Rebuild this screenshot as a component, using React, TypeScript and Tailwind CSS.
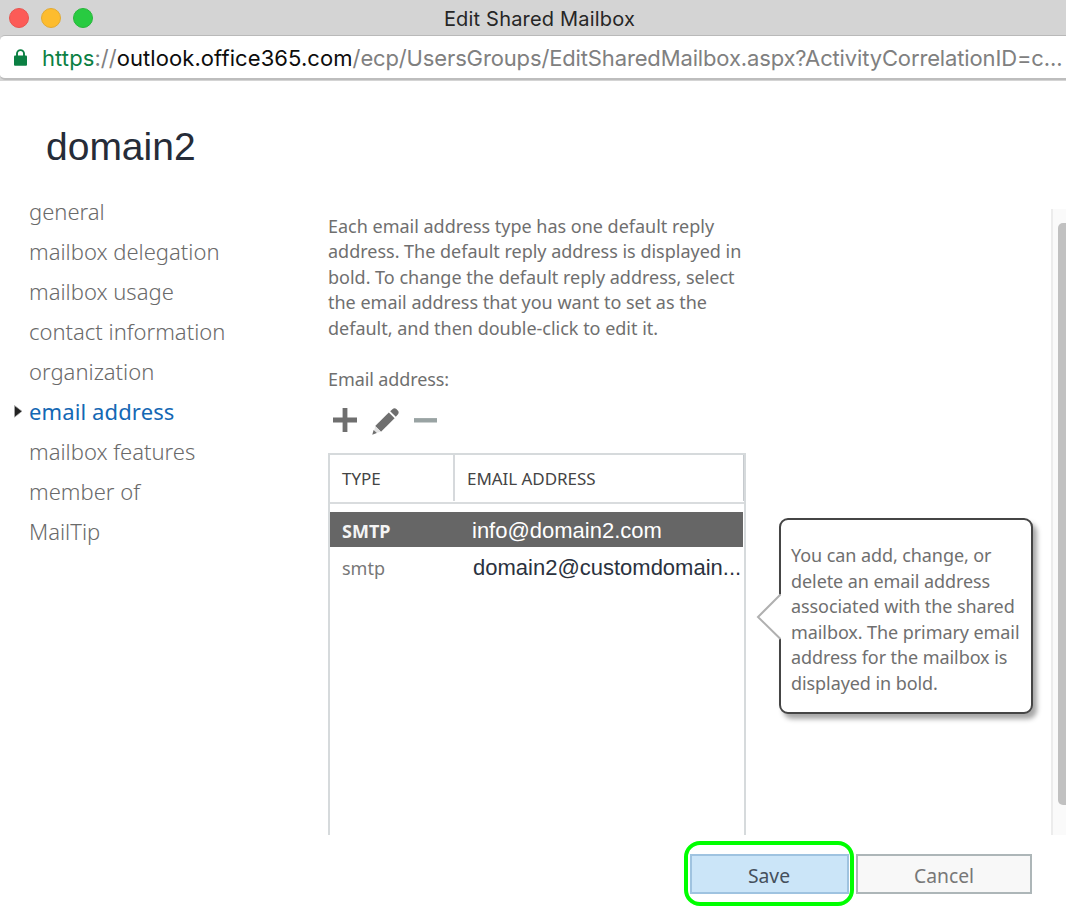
type NavItem = { label: string; active?: boolean };

const navItems: NavItem[] = [
  { label: 'general' },
  { label: 'mailbox delegation' },
  { label: 'mailbox usage' },
  { label: 'contact information' },
  { label: 'organization' },
  { label: 'email address', active: true },
  { label: 'mailbox features' },
  { label: 'member of' },
  { label: 'MailTip' },
];

function TitleBar() {
  return (
    <header className="grid h-[35px] grid-cols-[1fr_auto_1fr] items-center bg-[#d4d4d4]">
      <div className="flex gap-3 pl-[9px]">
        <span className="size-5 rounded-full border border-[#e8544f] bg-[#fc5b57]" />
        <span className="size-5 rounded-full border border-[#e2aa32] bg-[#fdbc2e]" />
        <span className="size-5 rounded-full border border-[#27b63a] bg-[#28cb41]" />
      </div>
      <h2 className="pt-0.5 pl-[13px] text-[20px] leading-none tracking-[0.19px] text-[#262626]">Edit Shared Mailbox</h2>
      <span />
    </header>
  );
}

function AddressBar() {
  return (
    <div className="h-[46px] bg-[#d4d4d4]">
      <div className="flex h-[45px] items-center rounded-l-[5px] border-t border-b-2 border-t-[#b9b9b9] border-b-[#bdbdbd] bg-white pl-[14px]">
        <svg className="mr-[15px] h-[17px] w-[13px]" viewBox="0 0 13 17">
          <path d="M3 8V4.6a3.5 3.5 0 0 1 7 0V8" fill="none" stroke="#0b8043" strokeWidth="1.9" />
          <rect x="0" y="6.6" width="13" height="10.2" rx="1" fill="#0b8043" />
        </svg>
        <p className="pt-[2px] text-[22px] leading-none whitespace-nowrap text-[#808080]">
          <span className="tracking-[0.1px] text-[#0b8043]">https</span>
          <span>://</span>
          <span className="tracking-[0.08px] text-[#0c0c0c]">outlook.office365.com</span>
          <span className="tracking-[-0.14px]">/ecp/UsersGroups/EditSharedMailbox.aspx?ActivityCorrelationID=c...</span>
        </p>
      </div>
    </div>
  );
}

function SideNav() {
  return (
    <nav className="w-[328px] shrink-0 text-[22px] text-[#6a6a6a]">
      <ul>
        {navItems.map((item) => (
          <li key={item.label} className="flex h-10 items-center leading-none">
            <span className="flex w-[29px] pl-[14px]">
              {item.active && (
                <svg className="h-[13px] w-[9px]" viewBox="0 0 9 13">
                  <path d="M.5 .5 8 6.3.5 12.2z" fill="#222" stroke="#aaa" strokeWidth=".7" />
                </svg>
              )}
            </span>
            <span
              className={
                item.active ? 'font-normal tracking-[0.12px] text-[#1468b4]' : 'font-light'
              }
            >
              {item.label}
            </span>
          </li>
        ))}
      </ul>
    </nav>
  );
}

function Toolbar() {
  return (
    <div className="flex h-[26px] items-start pl-[5px]">
      <svg className="h-6 w-6" viewBox="0 0 24 24">
        <path d="M12 0v24M0 12h24" stroke="#6f6f6f" strokeWidth="4.8" />
      </svg>
      <svg className="ml-[15px] h-[27px] w-[27px]" viewBox="0 0 27 27">
        <path d="M3.2 18 16.8 4.4 22.6 10.2 9 23.8z" fill="#6f6f6f" />
        <path d="M18.2 3.2 20.4 1.2Q22.4-.6 24.4 1L26 2.8Q27.4 4.6 25.8 6.4L23.8 8.8z" fill="#6f6f6f" />
        <path d="M3.2 18 9 23.8 4 24.9 2.2 23z" fill="#e2e2e2" />
        <path d="M1.6 21.9 4.8 25 .3 26.7z" fill="#6f6f6f" />
      </svg>
      <svg className="ml-[15px] h-6 w-[23px]" viewBox="0 0 23 24">
        <path d="M0 12.3h23" stroke="#99a3a3" strokeWidth="4.4" />
      </svg>
    </div>
  );
}

function AddressTable() {
  return (
    <div className="flex min-h-0 w-[418px] flex-1 flex-col border-x-2 border-t-2 border-[#d6dadc]">
      <div className="flex h-[49px] items-center border-b-2 border-[#d9dcde] text-[17px] text-[#444]">
        <span className="flex h-[46px] w-[125px] items-center border-r-2 border-[#d6d9dc] pl-[12px]">TYPE</span>
        <span className="flex h-[46px] flex-1 items-center border-r border-[#c6cace] pl-[12px] tracking-[-0.05px]">EMAIL ADDRESS</span>
      </div>
      <div className="mt-2 mr-px flex h-[35px] items-center bg-[#666] text-white">
        <span className="w-[142px] pt-[3px] pl-[12px] text-[18px] leading-none font-bold text-[#f4f4f4]">SMTP</span>
        <span className="pt-[3px] font-['Liberation_Sans',sans-serif] text-[22px] leading-none">info@domain2.com</span>
      </div>
      <div className="flex h-[40px] items-center">
        <span className="w-[143px] pt-[3px] pl-[12px] text-[18px] leading-none text-[#777]">smtp</span>
        <span className="pt-[3px] font-['Liberation_Sans',sans-serif] text-[22px] leading-none whitespace-nowrap text-[#2b323e]">
          domain2@customdomain...
        </span>
      </div>
    </div>
  );
}

function HelpCallout() {
  return (
    <aside className="relative mt-[309px] ml-[33px] h-[196px] w-[254px] rounded-[9px] border-2 border-[#454545] bg-white pt-[23px] pl-[10px] text-[18px] leading-[25.6px] tracking-[-0.08px] whitespace-nowrap text-[#6f6f6f] shadow-[4px_5px_5px_rgba(0,0,0,0.35)]">
      <svg className="absolute top-[73px] -left-[25px] h-[48px] w-[26px]" viewBox="0 0 26 48">
        <path d="M25.5 0.5 2 24 25.5 46.5z" fill="#fff" />
        <path d="M24.5 1.5 2 24 24.5 46" fill="none" stroke="#b0b0b0" strokeWidth="2" />
      </svg>
      <p>
        You can add, change, or
        <br />
        delete an email address
        <br />
        associated with the shared
        <br />
        mailbox. The primary email
        <br />
        address for the mailbox is
        <br />
        displayed in bold.
      </p>
    </aside>
  );
}

export default function App() {
  return (
    <div className="h-[914px] w-[1066px] overflow-hidden bg-white font-['Inter',sans-serif]">
      <TitleBar />
      <AddressBar />
      <main className="flex h-[833px] flex-col font-['Noto_Sans',sans-serif]">
        <h1 className="h-[128px] pt-[46px] pl-[46px] font-['Liberation_Sans',sans-serif] text-[39px] leading-none text-[#262c38]">
          domain2
        </h1>
        <div className="flex h-[626px]">
          <div className="-mt-[18px]">
            <SideNav />
          </div>
          <section className="flex w-[418px] flex-col">
            <p className="mt-[4.5px] text-[18px] leading-[25.6px] tracking-[-0.01px] whitespace-nowrap text-[#6f6f6f]">
              Each email address type has one default reply
              <br />
              address. The default reply address is displayed in
              <br />
              bold. To change the default reply address, select
              <br />
              the email address that you want to set as the
              <br />
              default, and then double-click to edit it.
            </p>
            <p className="mt-[25.5px] mb-[16px] text-[18px] leading-[25px] tracking-[-0.1px] text-[#6f6f6f]">Email address:</p>
            <div className="mb-[19px]">
              <Toolbar />
            </div>
            <AddressTable />
          </section>
          <HelpCallout />
          <div className="ml-auto flex w-[15px] justify-end border-l-2 border-[#ececec] bg-[#fafafa] pt-[14px]">
            <div className="h-[582px] w-2 rounded-l-[5px] bg-[#c1c1c1]" />
          </div>
        </div>
        <footer className="flex items-center pt-[6px] pl-[684px] text-[19.3px] leading-none">
          <div className="flex h-[65px] w-[170px] items-center justify-center rounded-[16px] border-[4.5px] border-[#00ff00] pt-px">
            <button className="h-[40px] w-[159px] border-2 border-[#9fc3e0] bg-[#cbe5f8] pt-[4px] text-[#45505c]">Save</button>
          </div>
          <button className="mt-px ml-[2px] h-[40px] w-[176px] border-2 border-[#adb6b8] bg-[#f8f8f8] pt-[4px] text-[#777]">Cancel</button>
        </footer>
      </main>
    </div>
  );
}
